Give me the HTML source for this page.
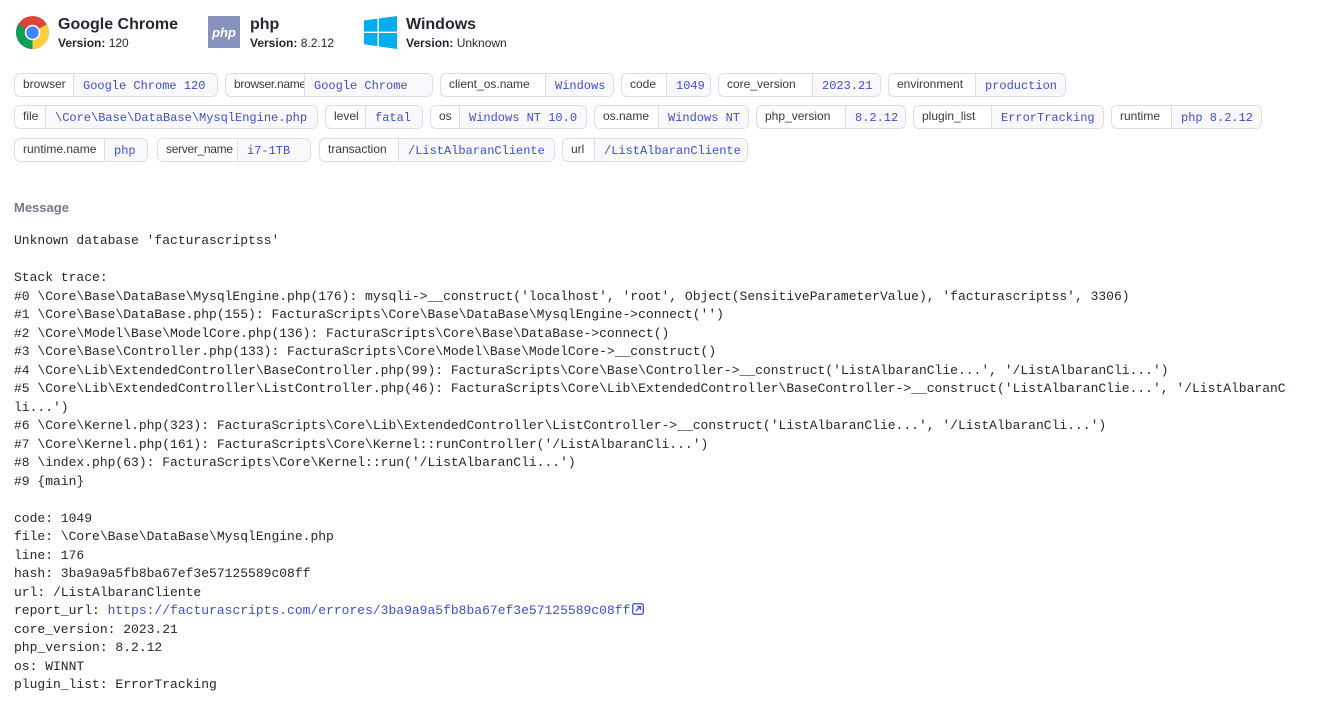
<!DOCTYPE html>
<html><head><meta charset="utf-8"><style>
body{margin:0;background:#fff;width:1321px;height:703px;overflow:hidden;font-family:"Liberation Sans",sans-serif;color:#2b2233;position:relative}
.ctx{position:absolute;top:16px;height:34px}
.ctx .t{position:absolute;left:42px;top:0px;font-size:16px;font-weight:bold;color:#2b2233;white-space:nowrap}
.ctx .v{position:absolute;left:42px;top:20px;font-size:12px;color:#2b2233;white-space:nowrap}
.ctx .v b{font-weight:bold}
.tag{position:absolute;height:24px;border:1px solid #e0dbe6;border-radius:6px;display:flex;box-sizing:border-box;overflow:hidden;white-space:nowrap}
.tag .k{font-size:12px;color:#3e3446;padding:0 0 0 8px;line-height:21px;border-right:1px solid #e0dbe6;box-sizing:border-box;overflow:hidden}
.tag .val{flex:1;background:#f9f8fd;font-family:"Liberation Mono",monospace;font-size:12px;color:#3e4fd0;line-height:24px;padding-left:9px}
h4{position:absolute;left:14px;top:200px;margin:0;font-size:13px;color:#80708f;font-weight:bold}
pre{position:absolute;left:14px;top:232px;margin:0;font-family:"Liberation Mono",monospace;font-size:13px;line-height:18.5px;color:#2b2233}
a{color:#3e4fd0;text-decoration:none}
</style></head><body>
<div class="ctx" style="left:16px">
<svg width="33" height="33" viewBox="0 0 32 32"><circle cx="16" cy="16" r="16" fill="#db4437"/><path d="M16 16 L2.14 8 A16 16 0 0 0 16 32 Z" fill="#0f9d58"/><path d="M16 16 L29.86 8 A16 16 0 0 1 16 32 Z" fill="#ffcd40"/><circle cx="16" cy="16" r="7.5" fill="#fff"/><circle cx="16" cy="16" r="6" fill="#4285f4"/></svg>
<div class="t">Google Chrome</div><div class="v"><b>Version:</b> 120</div></div>
<div class="ctx" style="left:208px">
<svg width="32" height="32"><rect width="32" height="32" fill="#8892bf"/><text x="16" y="21" font-family="Liberation Sans" font-style="italic" font-weight="bold" font-size="13" fill="#fff" text-anchor="middle">php</text></svg>
<div class="t">php</div><div class="v"><b>Version:</b> 8.2.12</div></div>
<div class="ctx" style="left:364px">
<svg width="33" height="33" viewBox="0 0 33 33"><path d="M0 4.5 L13.5 2.6 V15.6 H0Z M15 2.4 L33 0 V15.6 H15Z M0 17 H13.5 V30.2 L0 28.3Z M15 17 H33 V33 L15 30.5Z" fill="#00adef"/></svg>
<div class="t">Windows</div><div class="v"><b>Version:</b> Unknown</div></div>

<div class="tag" style="left:14px;top:73px;width:204px"><div class="k" style="width:59px">browser</div><div class="val">Google Chrome 120</div></div>
<div class="tag" style="left:225px;top:73px;width:208px"><div class="k" style="width:79px;letter-spacing:-0.3px">browser.name</div><div class="val">Google Chrome</div></div>
<div class="tag" style="left:440px;top:73px;width:174px"><div class="k" style="width:105px">client_os.name</div><div class="val">Windows</div></div>
<div class="tag" style="left:621px;top:73px;width:90px"><div class="k" style="width:45px">code</div><div class="val">1049</div></div>
<div class="tag" style="left:718px;top:73px;width:163px"><div class="k" style="width:94px">core_version</div><div class="val">2023.21</div></div>
<div class="tag" style="left:888px;top:73px;width:178px"><div class="k" style="width:87px">environment</div><div class="val">production</div></div>

<div class="tag" style="left:14px;top:105px;width:304px"><div class="k" style="width:31px">file</div><div class="val">\Core\Base\DataBase\MysqlEngine.php</div></div>
<div class="tag" style="left:325px;top:105px;width:98px"><div class="k" style="width:40px">level</div><div class="val">fatal</div></div>
<div class="tag" style="left:430px;top:105px;width:157px"><div class="k" style="width:29px">os</div><div class="val">Windows NT 10.0</div></div>
<div class="tag" style="left:594px;top:105px;width:155px"><div class="k" style="width:64px">os.name</div><div class="val">Windows NT</div></div>
<div class="tag" style="left:756px;top:105px;width:150px"><div class="k" style="width:89px">php_version</div><div class="val">8.2.12</div></div>
<div class="tag" style="left:913px;top:105px;width:191px"><div class="k" style="width:78px">plugin_list</div><div class="val">ErrorTracking</div></div>
<div class="tag" style="left:1111px;top:105px;width:151px"><div class="k" style="width:60px">runtime</div><div class="val">php 8.2.12</div></div>

<div class="tag" style="left:14px;top:138px;width:134px"><div class="k" style="width:90px">runtime.name</div><div class="val">php</div></div>
<div class="tag" style="left:157px;top:138px;width:154px"><div class="k" style="width:80px;letter-spacing:-0.3px">server_name</div><div class="val">i7-1TB</div></div>
<div class="tag" style="left:319px;top:138px;width:236px"><div class="k" style="width:79px">transaction</div><div class="val">/ListAlbaranCliente</div></div>
<div class="tag" style="left:562px;top:138px;width:186px"><div class="k" style="width:32px">url</div><div class="val">/ListAlbaranCliente</div></div>

<h4>Message</h4>
<pre>Unknown database 'facturascriptss'

Stack trace:
#0 \Core\Base\DataBase\MysqlEngine.php(176): mysqli-&gt;__construct('localhost', 'root', Object(SensitiveParameterValue), 'facturascriptss', 3306)
#1 \Core\Base\DataBase.php(155): FacturaScripts\Core\Base\DataBase\MysqlEngine-&gt;connect('')
#2 \Core\Model\Base\ModelCore.php(136): FacturaScripts\Core\Base\DataBase-&gt;connect()
#3 \Core\Base\Controller.php(133): FacturaScripts\Core\Model\Base\ModelCore-&gt;__construct()
#4 \Core\Lib\ExtendedController\BaseController.php(99): FacturaScripts\Core\Base\Controller-&gt;__construct('ListAlbaranClie...', '/ListAlbaranCli...')
#5 \Core\Lib\ExtendedController\ListController.php(46): FacturaScripts\Core\Lib\ExtendedController\BaseController-&gt;__construct('ListAlbaranClie...', '/ListAlbaranC
li...')
#6 \Core\Kernel.php(323): FacturaScripts\Core\Lib\ExtendedController\ListController-&gt;__construct('ListAlbaranClie...', '/ListAlbaranCli...')
#7 \Core\Kernel.php(161): FacturaScripts\Core\Kernel::runController('/ListAlbaranCli...')
#8 \index.php(63): FacturaScripts\Core\Kernel::run('/ListAlbaranCli...')
#9 {main}

code: 1049
file: \Core\Base\DataBase\MysqlEngine.php
line: 176
hash: 3ba9a9a5fb8ba67ef3e57125589c08ff
url: /ListAlbaranCliente
report_url: <a>https://facturascripts.com/errores/3ba9a9a5fb8ba67ef3e57125589c08ff</a><svg width="12" height="12" viewBox="0 0 12 12" style="vertical-align:-1px;margin-left:2px"><rect x="0.75" y="0.75" width="10.5" height="10.5" rx="1.5" fill="none" stroke="#3e4fd0" stroke-width="1.3"/><path d="M4 8 L8.5 3.5 M5 3.5 H8.5 V7" fill="none" stroke="#3e4fd0" stroke-width="1.3"/></svg>
core_version: 2023.21
php_version: 8.2.12
os: WINNT
plugin_list: ErrorTracking</pre>
</body></html>
